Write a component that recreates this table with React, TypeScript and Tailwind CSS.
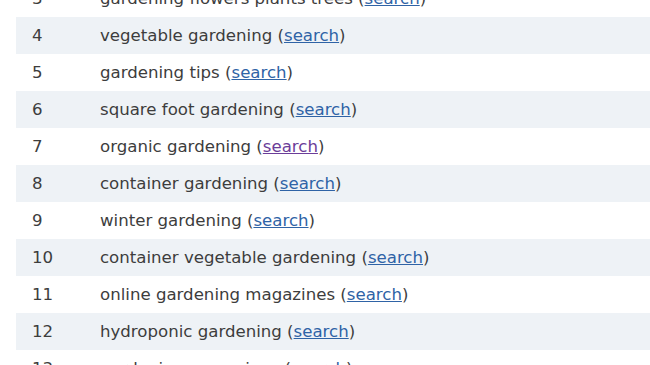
const ROWS: { n: number; term: string; visited?: boolean }[] = [
  { n: 3, term: 'gardening flowers plants trees' },
  { n: 4, term: 'vegetable gardening' },
  { n: 5, term: 'gardening tips' },
  { n: 6, term: 'square foot gardening' },
  { n: 7, term: 'organic gardening', visited: true },
  { n: 8, term: 'container gardening' },
  { n: 9, term: 'winter gardening' },
  { n: 10, term: 'container vegetable gardening' },
  { n: 11, term: 'online gardening magazines' },
  { n: 12, term: 'hydroponic gardening' },
  { n: 13, term: 'gardening magazines' },
];

export default function App() {
  return (
    <div className="h-[365px] w-[650px] overflow-hidden bg-white font-['DejaVu_Sans',sans-serif] text-[16.6px] text-[#3d3d3d]">
      <div className="-mt-[20px] ml-[16px]">
        {ROWS.map((r) => (
          <div
            key={r.n}
            className={`flex h-[37px] items-center pt-[2px] ${r.n % 2 === 0 ? 'bg-[#eef2f6]' : 'bg-white'}`}
          >
            <div className="w-[84px] pl-[16px]">{r.n}</div>
            <div>
              {r.term} (
              <a
                href="#"
                className={`underline ${r.visited ? 'text-[#6b3d99]' : 'text-[#2f63a6]'}`}
              >
                search
              </a>
              )
            </div>
          </div>
        ))}
      </div>
    </div>
  );
}
